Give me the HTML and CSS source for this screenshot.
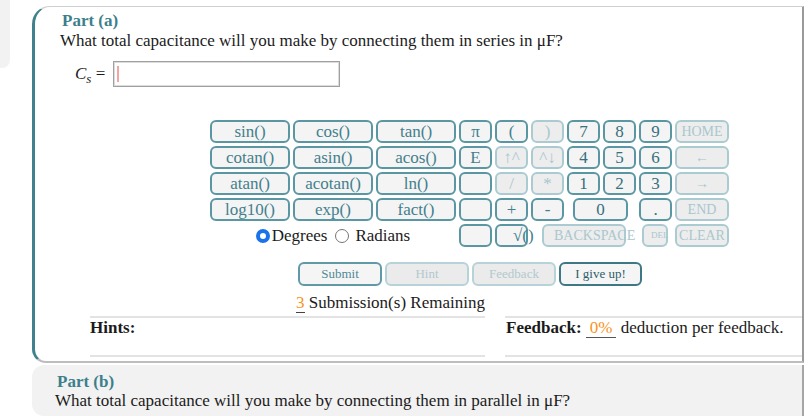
FILE: index.html
```html
<!DOCTYPE html>
<html lang="en">
<head>
<meta charset="utf-8">
<title>Part (a)</title>
<link rel="stylesheet" href="styles.css">
</head>
<body>
<div class="page">
  <div class="side"></div>
  <div class="main">
    <section class="card">
      <h2 class="part-title">Part (a)</h2>
      <p class="question">What total capacitance will you make by connecting them in series in μF?</p>
      <div class="answer-row">
        <span class="var"><i>C</i><sub><i>s</i></sub> =</span>
        <div class="answer-box"><span class="caret"></span></div>
      </div>

      <div class="keypad">
        <button class="k">sin()</button>
        <button class="k">cos()</button>
        <button class="k">tan()</button>
        <button class="k">π</button>
        <button class="k">(</button>
        <button class="k off">)</button>
        <button class="k num">7</button>
        <button class="k num">8</button>
        <button class="k num">9</button>
        <button class="k off word">HOME</button>

        <button class="k">cotan()</button>
        <button class="k">asin()</button>
        <button class="k">acos()</button>
        <button class="k">E</button>
        <button class="k off">↑^</button>
        <button class="k off">^↓</button>
        <button class="k num">4</button>
        <button class="k num">5</button>
        <button class="k num">6</button>
        <button class="k off word">←</button>

        <button class="k">atan()</button>
        <button class="k">acotan()</button>
        <button class="k">ln()</button>
        <button class="k"></button>
        <button class="k off">/</button>
        <button class="k off">*</button>
        <button class="k num">1</button>
        <button class="k num">2</button>
        <button class="k num">3</button>
        <button class="k off word">→</button>

        <button class="k">log10()</button>
        <button class="k">exp()</button>
        <button class="k">fact()</button>
        <button class="k"></button>
        <button class="k">+</button>
        <button class="k">-</button>
        <button class="k num zero">0</button>
        <button class="k num">.</button>
        <button class="k off word">END</button>

        <div class="angle">
          <label class="radio"><input type="radio" name="ang" checked><span>Degrees</span></label>
          <label class="radio"><input type="radio" name="ang"><span>Radians</span></label>
        </div>
        <button class="k"></button>
        <button class="k sqrt">√()</button>
        <button class="k off word backspace">BACKSPACE</button>
        <button class="k off del">DEL</button>
        <button class="k off word">CLEAR</button>
      </div>

      <div class="actions">
        <button class="act">Submit</button>
        <button class="act off">Hint</button>
        <button class="act off">Feedback</button>
        <button class="act dark">I give up!</button>
      </div>

      <p class="remaining"><span class="count">3</span> Submission(s) Remaining</p>

      <div class="info">
        <div class="info-col hints"><b>Hints:</b></div>
        <div class="info-col feedback"><b>Feedback:</b> <span class="pct">0%</span> deduction per feedback.</div>
      </div>
    </section>

    <section class="part-b">
      <h2 class="part-title">Part (b)</h2>
      <p class="question">What total capacitance will you make by connecting them in parallel in μF?</p>
    </section>
  </div>
</div>
</body>
</html>
```
FILE: styles.css
```css
* { box-sizing: border-box; }
html, body { margin: 0; padding: 0; background: #fff; }
body {
  font-family: "Liberation Serif", "Times New Roman", serif;
  font-size: 17px;
  color: #1b1b1b;
  overflow: hidden;
}
.page { display: flex; align-items: flex-start; }
.side {
  flex: none;
  width: 10px;
  height: 68px;
  background: #f2f2f2;
  border-bottom-right-radius: 8px;
}
.main { flex: 1; margin-left: 22px; padding-top: 6px; }

.card {
  border-top: 1px solid #cfcfcf;
  border-left: 3px solid #3f818e;
  border-right: 2px solid #9a9a9a;
  border-bottom: 2px solid #bdbdbd;
  border-radius: 18px 0 0 14px;
  padding: 4px 0 4px 25px;
}
.part-title {
  margin: 0;
  font-size: 17px;
  font-weight: bold;
  line-height: 20px;
  color: #3d7f8c;
  padding-left: 2px;
}
.question { margin: 0; line-height: 20px; }

.answer-row {
  display: flex;
  align-items: center;
  margin: 10px 0 0 15px;
  height: 26px;
}
.var { margin-right: 8px; white-space: nowrap; }
.var sub { font-size: 13px; vertical-align: -4px; line-height: 0; }
.answer-box {
  width: 227px;
  height: 26px;
  border: 1px solid #a0a0a0;
  box-shadow: inset 0 0 0 1px #dcdcdc;
  background: #fff;
  display: flex;
  align-items: center;
  padding-left: 3px;
}
.caret { width: 2px; height: 16px; background: #f6a3a3; }

.keypad {
  margin: 33px 0 0 150px;
  display: grid;
  grid-template-columns: 80px 80px 80px repeat(6, 33px) 54px;
  grid-auto-rows: 23px;
  column-gap: 3px;
  row-gap: 3px;
}
.k {
  font-family: inherit;
  font-size: 17px;
  line-height: 1;
  color: #42808d;
  background: #f4f4f4;
  border: 2px solid #5b97a3;
  border-radius: 6px;
  padding: 0;
  margin: 0;
  display: flex;
  align-items: center;
  justify-content: center;
  white-space: nowrap;
  overflow: visible;
}
.k.num { color: #36707c; }
.k.off {
  color: #a9c7cd;
  border-color: #aacbd2;
  background: #ededed;
}
.k.word { font-size: 14px; }
.k.zero { grid-column: span 2; margin: 0 8px 0 6px; }
.k.sqrt { justify-content: flex-start; padding-left: 16px; }
.k.backspace { grid-column: span 3; margin: 0 10px 0 11px; justify-content: flex-start; padding-left: 10px; }
.k.del { font-size: 9px; margin: 0 4px 0 3px; justify-content: flex-start; padding-left: 7px; }

.angle {
  grid-column: span 3;
  display: flex;
  align-items: center;
  justify-content: center;
  gap: 8px;
}
.radio { display: flex; align-items: center; gap: 2px; color: #1b1b1b; }
.radio + .radio { gap: 6px; }
.radio input {
  appearance: none;
  -webkit-appearance: none;
  margin: 0;
  width: 14px;
  height: 14px;
  border-radius: 50%;
  border: 1.5px solid #767676;
  background: #fff;
}
.radio input:checked { border: 4px solid #1a73e8; }

.actions {
  display: flex;
  gap: 3px;
  margin: 15px 0 0 238px;
}
.act {
  font-family: inherit;
  font-size: 13px;
  height: 24px;
  width: 84px;
  border-radius: 6px;
  border: 2px solid #5f9aa6;
  background: #f5f5f5;
  color: #4d8a96;
  padding: 0;
}
.act.off { border-color: #b6d3d9; background: #ebebeb; color: #b2c9ce; width: 84px; }
.act.dark { border-color: #3e7886; color: #2d5e6a; width: 83px; }

.remaining { margin: 7px 0 0 236px; line-height: 20px; }
.count { color: #f7941d; border-bottom: 1px solid #444; }

.info { display: flex; gap: 20px; margin: 3px 0 0 30px; }
.info-col {
  border-top: 2px solid #e3e3e3;
  border-bottom: 2px solid #e3e3e3;
  height: 41px;
  line-height: 20px;
}
.hints { width: 395px; }
.feedback { width: 297px; padding-left: 1px; }
.pct { color: #f7941d; border-bottom: 1px solid #555; padding: 0 4px; }

.part-b {
  margin-top: 2px;
  background: #f2f2f2;
  border-radius: 12px 0 0 12px;
  border-right: 2px solid #a6a6a6;
  padding: 7px 0 6px 23px;
}
.part-b .part-title, .part-b .question { line-height: 19px; }
```
